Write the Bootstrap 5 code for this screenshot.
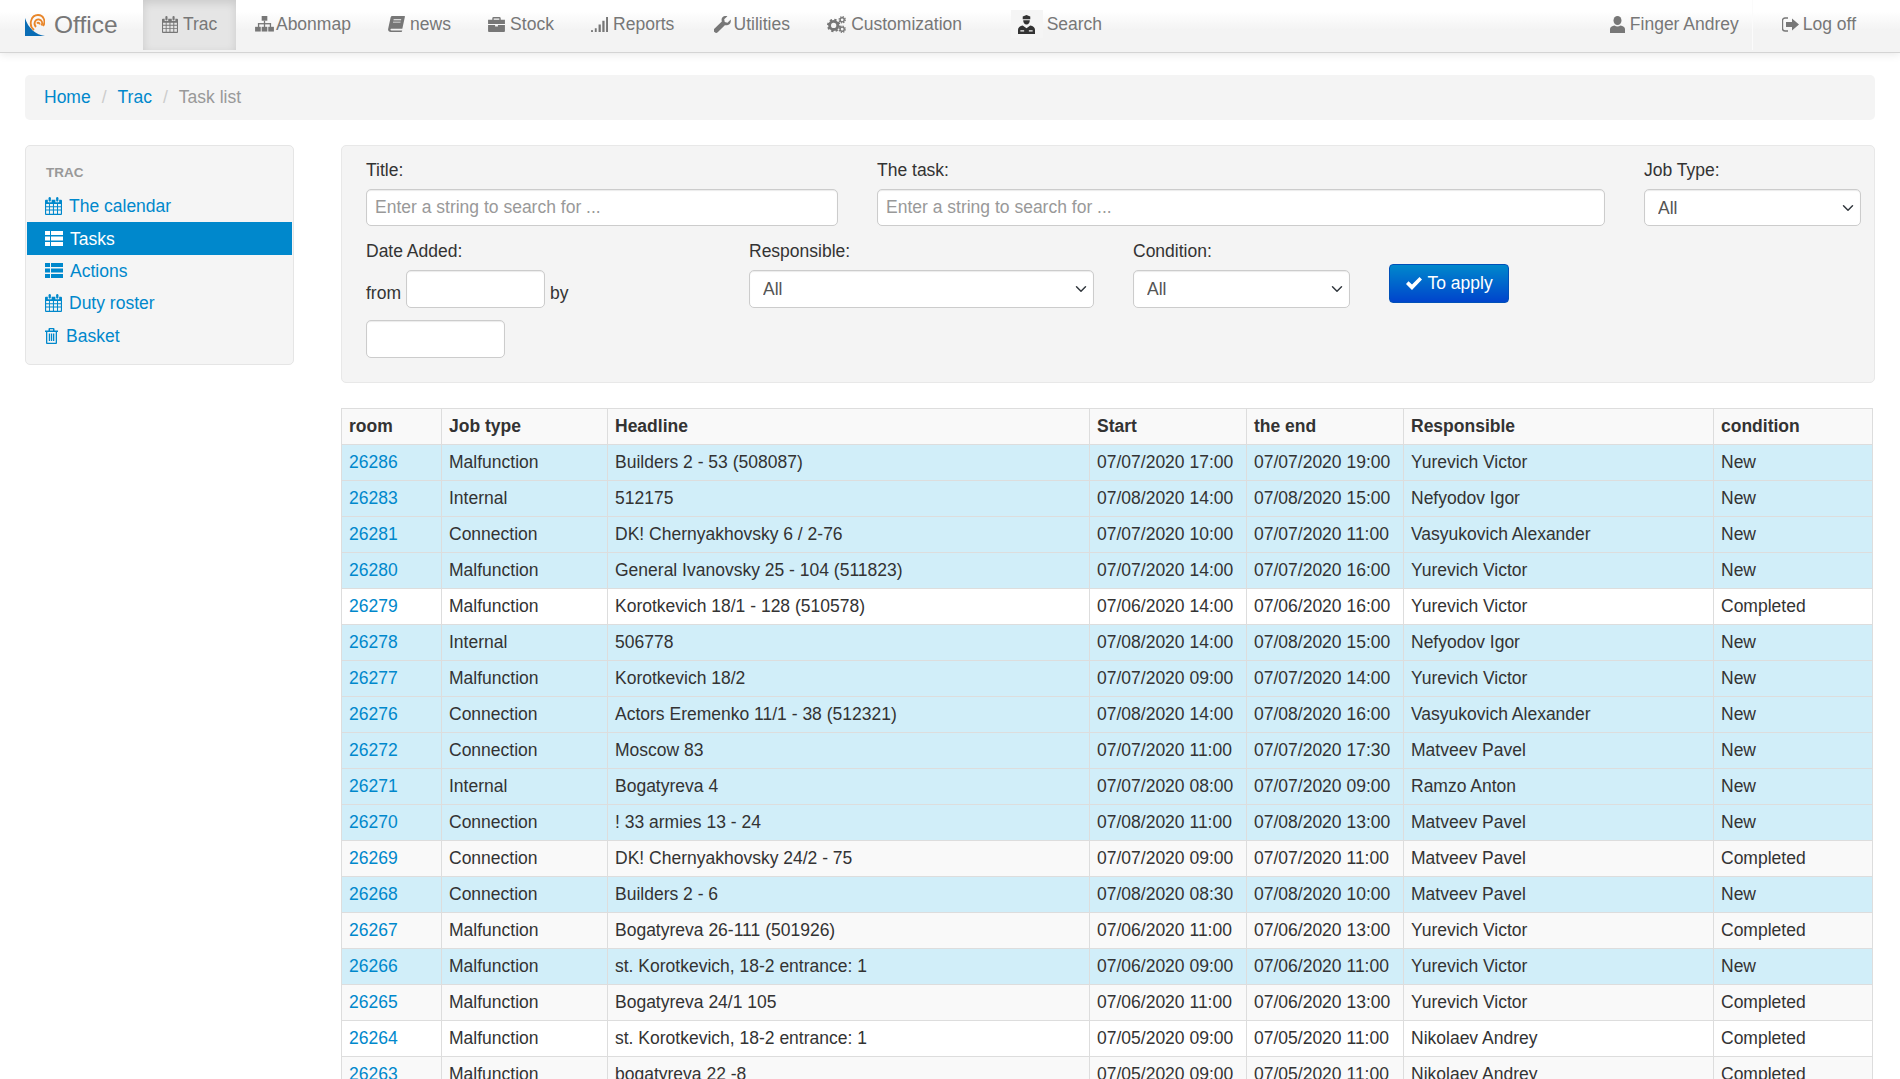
<!DOCTYPE html>
<html lang="en">
<head>
  <meta charset="UTF-8">
  <title>Task list</title>
  <meta name="viewport" content="width=device-width, initial-scale=1">
  <link href="https://cdn.jsdelivr.net/npm/bootstrap@5.3.0/dist/css/bootstrap.min.css" rel="stylesheet">
  <style>
    html, body { height: 100vh; overflow: hidden; }
    body {
      font-family: "Liberation Sans", Arial, sans-serif;
      font-size: 17.5px;
      line-height: 24px;
      color: #333;
      background: #fff;
    }
    a { color: #0088cc; text-decoration: none; }
    .ico { display: inline-block; fill: currentColor; flex: none; }

    /* Top bar */
    .top-bar {
      height: 53px;
      padding: 0 !important;
      background: linear-gradient(#fff 22%, #f3f3f3 58%);
      border-bottom: 1px solid #d4d4d4;
      box-shadow: 0 1px 9px rgba(0, 0, 0, .1);
      flex-wrap: nowrap;
    }
    .top-brand { display: flex; align-items: center; gap: 9px; margin: 0 25px; width: 93px; font-size: 24.5px; color: #777; height: 52px; padding-bottom: 2px; }
    .top-link {
      display: flex;
      align-items: center;
      gap: 5px;
      height: 50px;
      margin-bottom: 2px;
      padding: 0 18.6px 2px;
      color: #777;
      white-space: nowrap;
    }
    .top-link.tight { gap: 2px; }
    .top-link.tool { gap: 3px; padding-left: 20.6px; }
    .top-link.current { padding: 0 19px 2px; background: #e5e5e5; box-shadow: inset 0 3px 8px rgba(0, 0, 0, .12); }
    .top-link.police { margin-left: 12px; padding-left: 27px; gap: 11px; }
    .top-link .badge-box { background: #f5f5f5; display: flex; width: 32px; height: 28px; margin-left: -9px; margin-right: -7px; align-items: center; justify-content: center; color: #333; }
    .top-right { margin-left: auto; display: flex; }
    .top-right .top-link { padding: 0 13px 2px 0; }
    .top-right .logoff { gap: 4px; border-left: 1px solid #fbfbfb; padding: 0 44px 2px 29px; }

    /* Breadcrumb */
    .trail {
      margin: 22px 25px 25px;
      height: 45px;
      padding: 0 19px 2px;
      align-items: center;
      background: #f4f4f4;
      border-radius: 5px;
      --bs-breadcrumb-margin-bottom: 0;
      --bs-breadcrumb-item-padding-x: 11px;
      --bs-breadcrumb-divider-color: #ccc;
      --bs-breadcrumb-item-active-color: #999;
    }

    /* Page columns */
    .page-body { padding: 0 25px; gap: 47px; }
    .side-box {
      width: 269px;
      height: 220px;
      flex: none;
      padding: 15px 1px 0;
      background: #f5f5f5;
      border: 1px solid #e5e5e5;
      border-radius: 5px;
    }
    .side-head { padding-left: 19px; margin-bottom: 5px; font-size: 13.5px; font-weight: bold; color: #999; }
    .side-link { display: flex; align-items: center; gap: 7px; height: 32.4px; padding-left: 18px; color: #0088cc; }
    .side-link.bin-link { gap: 8px; }
    .side-link.current { background: #0088cc; color: #fff; }
    .main-col { flex: 1; min-width: 0; }

    /* Filter */
    .filter-box {
      height: 238px;
      padding: 12px 13px 0 24px;
      background: #f4f4f4;
      border: 1px solid #e8e8e8;
      border-radius: 5px;
      margin-bottom: 25px;
    }
    .filter-line { display: flex; gap: 39px; }
    .filter-line + .filter-line { margin-top: 13px; }
    .f-title { width: 472px; }
    .f-task { width: 728px; }
    .f-type, .f-state { width: 217px; }
    .f-date { width: 344px; }
    .f-resp { width: 345px; }
    .filter-box label { display: block; margin-bottom: 7px; }
    .filter-box .form-control, .filter-box .form-select {
      height: 37px;
      font-size: 17.5px;
      line-height: 24px;
      padding: 5px 8px;
      color: #555;
      border: 1px solid #ccc;
      border-radius: 5px;
      box-shadow: inset 0 1px 1px rgba(0, 0, 0, .08);
    }
    .filter-box .form-select { padding-left: 13px; background-position: right 5px center; background-size: 14px 12px; }
    .filter-box .form-control::placeholder { color: #999; }
    .second-line .form-control, .second-line .form-select { height: 38px; }
    .date-wrap { display: flex; flex-wrap: wrap; align-items: center; column-gap: 5px; row-gap: 12px; }
    .date-wrap span { margin-top: 8px; }
    .date-input { width: 139px !important; }
    .apply-btn {
      display: flex;
      align-items: center;
      gap: 6px;
      height: 39px;
      margin-top: 25px;
      padding: 0 15.5px;
      font-size: 17.5px;
      color: #fff;
      background: linear-gradient(#0088cc, #0044cc);
      border: 1px solid #0050b8;
      border-radius: 4px;
    }
    .apply-btn:hover { color: #fff; }

    /* Task table */
    .task-table {
      table-layout: fixed;
      width: 1532px;
      margin: 0;
      --bs-table-border-color: #ddd;
      --bs-table-bg: #fff;
      --bs-table-color: #333;
    }
    .task-table th, .task-table td { padding: 5px 7px; line-height: 25px; white-space: nowrap; border-color: #ddd; }
    .task-table thead th { --bs-table-bg: #f9f9f9; height: 36px; font-weight: bold; }
    .task-table tr.is-done { --bs-table-bg: #f9f9f9; }
    .task-table tr.is-plain { --bs-table-bg: #fff; }
    .task-table tr.is-new { --bs-table-bg: #d1eef9; }
    .task-table th:nth-child(1) { width: 100px; }
    .task-table th:nth-child(2) { width: 166px; }
    .task-table th:nth-child(3) { width: 482px; }
    .task-table th:nth-child(4), .task-table th:nth-child(5) { width: 157px; }
    .task-table th:nth-child(6) { width: 310px; }
  </style>
</head>
<body>

  <!-- Glyphs used by the bar, side menu and button -->
  <svg width="0" height="0" class="position-absolute">
    <symbol id="i-cal" viewBox="0 0 18 19">
      <path fill-rule="evenodd" d="M1 3h2v2.5h4V3h4v2.5h4V3h2a1 1 0 0 1 1 1v14a1 1 0 0 1-1 1H1a1 1 0 0 1-1-1V4a1 1 0 0 1 1-1zM1.200 7.500v2.300h3v-2.300zM5.200 7.500v2.300h3.200v-2.300zM9.500 7.500v2.300h3.200v-2.300zM13.800 7.500v2.300h3v-2.300zM1.200 10.800v2.500h3v-2.500zM5.200 10.800v2.500h3.200v-2.500zM9.500 10.800v2.500h3.200v-2.500zM13.800 10.800v2.500h3v-2.500zM1.200 14.300v3.300h3v-3.300zM5.200 14.300v3.300h3.200v-3.300zM9.500 14.300v3.300h3.200v-3.300zM13.800 14.300v3.300h3v-3.300z"/>
      <rect x="3.800" y="0" width="2.400" height="5" rx="1.200"/><rect x="11.800" y="0" width="2.400" height="5" rx="1.200"/>
    </symbol>
    <symbol id="i-map" viewBox="0 0 20 17">
      <rect x="7" y="0" width="6" height="5"/><rect x="9.300" y="5" width="1.400" height="7"/><rect x="3" y="7.500" width="14" height="1.400"/><rect x="3" y="8" width="1.400" height="4"/><rect x="15.600" y="8" width="1.400" height="4"/>
      <rect x="0" y="11.500" width="6" height="5"/><rect x="7" y="11.500" width="6" height="5"/><rect x="14" y="11.500" width="6" height="5"/>
    </symbol>
    <symbol id="i-book" viewBox="0 0 18 17">
      <path d="M4.500 0H17.500a.5.500 0 0 1 .5.600L15.200 13.500H3.800c-1 0-1.300.700-1.200 1.200.1.400.5.700 1 .7h11.500l-.3 1.100a.7.700 0 0 1-.7.500H3c-2 0-3.200-1.300-2.900-3.100L2.800 1.400A1.800 1.800 0 0 1 4.500 0zM6 3.500l-.2 1h8l.2-1zM5.400 6l-.2 1h8l.2-1z" fill-rule="evenodd"/>
    </symbol>
    <symbol id="i-case" viewBox="0 0 18 16">
      <path fill-rule="evenodd" d="M6 0h6a1.500 1.500 0 0 1 1.500 1.500V3H18v4.500H0V3h4.500V1.500A1.500 1.500 0 0 1 6 0zm0 1.500V3h6V1.500zM0 8.500h7.500V10h3V8.500H18V15a1 1 0 0 1-1 1H1a1 1 0 0 1-1-1z"/>
    </symbol>
    <symbol id="i-bars" viewBox="0 0 18 16">
      <rect x="0" y="14" width="2" height="2"/><rect x="4" y="12" width="2" height="4"/><rect x="8" y="8" width="2.400" height="8"/><rect x="12" y="4" width="2.400" height="12"/><rect x="16" y="0" width="2.400" height="16"/>
    </symbol>
    <symbol id="i-wrench" viewBox="0 0 18 18">
      <path d="M17.700 3.700c.6 2.600-.6 5-3 5.900-1.100.4-2.200.4-3.200.1L4.200 17a2.900 2.900 0 0 1-4.100-.2A2.900 2.900 0 0 1 .9 13l7.400-7.300c-.4-1-.4-2.200 0-3.200C9.200.3 11.600-.6 14.200.300L10.800 3.500l.6 2.900 2.900.7z"/>
    </symbol>
    <symbol id="i-cogs" viewBox="0 0 20 18">
      <circle cx="7" cy="10" r="4.300" fill="none" stroke="currentColor" stroke-width="3"/>
      <circle cx="7" cy="10" r="6" fill="none" stroke="currentColor" stroke-width="2.200" stroke-dasharray="2.400 2.300"/>
      <circle cx="16" cy="4" r="2.200" fill="none" stroke="currentColor" stroke-width="1.500"/>
      <circle cx="16" cy="4" r="3.300" fill="none" stroke="currentColor" stroke-width="1.300" stroke-dasharray="1.400 1.200"/>
      <circle cx="16" cy="14" r="2.200" fill="none" stroke="currentColor" stroke-width="1.500"/>
      <circle cx="16" cy="14" r="3.300" fill="none" stroke="currentColor" stroke-width="1.300" stroke-dasharray="1.400 1.200"/>
    </symbol>
    <symbol id="i-police" viewBox="0 0 18 20">
      <path d="M5 1.500 9 0l4 1.500V4.500H5z"/><path d="M5.500 5.500h7c0 2.800-1.300 4.500-3.500 4.500S5.500 8.300 5.500 5.500z"/>
      <path fill-rule="evenodd" d="M5 11l4 3 4-3c3 .7 5 2 5 4.500V20H0v-4.500C0 13 2 11.700 5 11zM2.500 16v1.500h4V16zM11.500 16v1.500h4V16z"/>
    </symbol>
    <symbol id="i-user" viewBox="0 0 15 17">
      <ellipse cx="7.500" cy="4.500" rx="4" ry="4.500"/><path d="M0 17v-4c0-2 2-3 4.500-3.500 1.800 1.200 4.200 1.200 6 0C13 10 15 11 15 13v4z"/>
    </symbol>
    <symbol id="i-exit" viewBox="0 0 17 15">
      <path d="M6 1H3a2.500 2.500 0 0 0-2.500 2.500v8A2.500 2.500 0 0 0 3 14h3" fill="none" stroke="currentColor" stroke-width="1.400"/>
      <path d="M4 5h6V1.500l7 6-7 6V10H4z"/>
    </symbol>
    <symbol id="i-list" viewBox="0 0 18 15">
      <rect x="0" y="0" width="5" height="4"/><rect x="6" y="0" width="12" height="4"/><rect x="0" y="5.500" width="5" height="4"/><rect x="6" y="5.500" width="12" height="4"/><rect x="0" y="11" width="5" height="4"/><rect x="6" y="11" width="12" height="4"/>
    </symbol>
    <symbol id="i-bin" viewBox="0 0 13 16">
      <path fill-rule="evenodd" d="M4.500 0h4A1 1 0 0 1 9.500 1V2.500H13V4h-1v11a1 1 0 0 1-1 1H2a1 1 0 0 1-1-1V4H0V2.500h3.500V1a1 1 0 0 1 1-1zM5 1.200V2.500h3V1.200zM2.300 4v10.800h8.400V4zM3.800 5.500h1.300V13H3.800zM5.900 5.500h1.300V13H5.900zM8 5.500h1.300V13H8z"/>
    </symbol>
    <symbol id="i-check" viewBox="0 0 16 13">
      <path d="M0 7l2.500-2.700L6 7.500 13.500 0 16 2.500 6 13z"/>
    </symbol>
  </svg>

  <!-- Top bar -->
  <nav class="navbar top-bar">
    <a class="top-brand" href="#">
      <svg class="ico" width="20" height="22" viewBox="0 0 20 22">
        <path d="M0 4v18h20C11 21 3 14 0 4z" fill="#0a6db5"/>
        <g fill="none" stroke="#e8862a" stroke-width="1.800">
          <path d="M9 16C3 11 6 1 13 1c6 0 8 7 5 11"/><path d="M11 13c-3-3-1-8 3-7.500 3 .4 4 3.500 2.500 6"/><path d="M12 9.500c1-1.500 3-.5 2.500 1"/>
        </g>
      </svg>
      Office
    </a>
    <a class="top-link current" href="#"><svg class="ico" width="16" height="17"><use href="#i-cal"/></svg>Trac</a>
    <a class="top-link tight" href="#"><svg class="ico" width="19" height="16"><use href="#i-map"/></svg>Abonmap</a>
    <a class="top-link" href="#"><svg class="ico" width="17" height="16"><use href="#i-book"/></svg>news</a>
    <a class="top-link" href="#"><svg class="ico" width="17" height="15"><use href="#i-case"/></svg>Stock</a>
    <a class="top-link" href="#"><svg class="ico" width="17" height="15"><use href="#i-bars"/></svg>Reports</a>
    <a class="top-link tool" href="#"><svg class="ico" width="17" height="17"><use href="#i-wrench"/></svg>Utilities</a>
    <a class="top-link" href="#"><svg class="ico" width="19" height="17"><use href="#i-cogs"/></svg>Customization</a>
    <a class="top-link police" href="#"><span class="badge-box"><svg class="ico" width="17" height="19"><use href="#i-police"/></svg></span>Search</a>
    <div class="top-right">
      <a class="top-link" href="#"><svg class="ico" width="15" height="17"><use href="#i-user"/></svg>Finger Andrey</a>
      <a class="top-link logoff" href="#"><svg class="ico" width="17" height="15"><use href="#i-exit"/></svg>Log off</a>
    </div>
  </nav>

  <!-- Breadcrumb -->
  <ol class="breadcrumb trail">
    <li class="breadcrumb-item"><a href="#">Home</a></li>
    <li class="breadcrumb-item"><a href="#">Trac</a></li>
    <li class="breadcrumb-item active">Task list</li>
  </ol>

  <div class="d-flex align-items-start page-body">

    <!-- Side menu -->
    <div class="side-box">
      <div class="side-head">TRAC</div>
      <a class="side-link" href="#"><svg class="ico" width="17" height="18"><use href="#i-cal"/></svg>The calendar</a>
      <a class="side-link current" href="#"><svg class="ico" width="18" height="15"><use href="#i-list"/></svg>Tasks</a>
      <a class="side-link" href="#"><svg class="ico" width="18" height="15"><use href="#i-list"/></svg>Actions</a>
      <a class="side-link" href="#"><svg class="ico" width="17" height="18"><use href="#i-cal"/></svg>Duty roster</a>
      <a class="side-link bin-link" href="#"><svg class="ico" width="13" height="16"><use href="#i-bin"/></svg>Basket</a>
    </div>

    <div class="main-col">

      <!-- Filter -->
      <form class="filter-box">
        <div class="filter-line">
          <div class="f-title">
            <label>Title:</label>
            <input type="text" class="form-control" placeholder="Enter a string to search for ...">
          </div>
          <div class="f-task">
            <label>The task:</label>
            <input type="text" class="form-control" placeholder="Enter a string to search for ...">
          </div>
          <div class="f-type">
            <label>Job Type:</label>
            <select class="form-select"><option>All</option></select>
          </div>
        </div>
        <div class="filter-line second-line">
          <div class="f-date">
            <label>Date Added:</label>
            <div class="date-wrap">
              <span>from</span>
              <input type="text" class="form-control date-input">
              <span>by</span>
              <input type="text" class="form-control date-input">
            </div>
          </div>
          <div class="f-resp">
            <label>Responsible:</label>
            <select class="form-select"><option>All</option></select>
          </div>
          <div class="f-state">
            <label>Condition:</label>
            <select class="form-select"><option>All</option></select>
          </div>
          <div>
            <button type="button" class="btn apply-btn"><svg class="ico" width="16" height="13"><use href="#i-check"/></svg>To apply</button>
          </div>
        </div>
      </form>

      <!-- Tasks -->
      <table class="table table-bordered task-table">
        <thead>
          <tr><th>room</th><th>Job type</th><th>Headline</th><th>Start</th><th>the end</th><th>Responsible</th><th>condition</th></tr>
        </thead>
        <tbody>
          <tr class="is-new"><td><a href="#">26286</a></td><td>Malfunction</td><td>Builders 2 - 53 (508087)</td><td>07/07/2020 17:00</td><td>07/07/2020 19:00</td><td>Yurevich Victor</td><td>New</td></tr>
          <tr class="is-new"><td><a href="#">26283</a></td><td>Internal</td><td>512175</td><td>07/08/2020 14:00</td><td>07/08/2020 15:00</td><td>Nefyodov Igor</td><td>New</td></tr>
          <tr class="is-new"><td><a href="#">26281</a></td><td>Connection</td><td>DK! Chernyakhovsky 6 / 2-76</td><td>07/07/2020 10:00</td><td>07/07/2020 11:00</td><td>Vasyukovich Alexander</td><td>New</td></tr>
          <tr class="is-new"><td><a href="#">26280</a></td><td>Malfunction</td><td>General Ivanovsky 25 - 104 (511823)</td><td>07/07/2020 14:00</td><td>07/07/2020 16:00</td><td>Yurevich Victor</td><td>New</td></tr>
          <tr class="is-plain"><td><a href="#">26279</a></td><td>Malfunction</td><td>Korotkevich 18/1 - 128 (510578)</td><td>07/06/2020 14:00</td><td>07/06/2020 16:00</td><td>Yurevich Victor</td><td>Completed</td></tr>
          <tr class="is-new"><td><a href="#">26278</a></td><td>Internal</td><td>506778</td><td>07/08/2020 14:00</td><td>07/08/2020 15:00</td><td>Nefyodov Igor</td><td>New</td></tr>
          <tr class="is-new"><td><a href="#">26277</a></td><td>Malfunction</td><td>Korotkevich 18/2</td><td>07/07/2020 09:00</td><td>07/07/2020 14:00</td><td>Yurevich Victor</td><td>New</td></tr>
          <tr class="is-new"><td><a href="#">26276</a></td><td>Connection</td><td>Actors Eremenko 11/1 - 38 (512321)</td><td>07/08/2020 14:00</td><td>07/08/2020 16:00</td><td>Vasyukovich Alexander</td><td>New</td></tr>
          <tr class="is-new"><td><a href="#">26272</a></td><td>Connection</td><td>Moscow 83</td><td>07/07/2020 11:00</td><td>07/07/2020 17:30</td><td>Matveev Pavel</td><td>New</td></tr>
          <tr class="is-new"><td><a href="#">26271</a></td><td>Internal</td><td>Bogatyreva 4</td><td>07/07/2020 08:00</td><td>07/07/2020 09:00</td><td>Ramzo Anton</td><td>New</td></tr>
          <tr class="is-new"><td><a href="#">26270</a></td><td>Connection</td><td>! 33 armies 13 - 24</td><td>07/08/2020 11:00</td><td>07/08/2020 13:00</td><td>Matveev Pavel</td><td>New</td></tr>
          <tr class="is-done"><td><a href="#">26269</a></td><td>Connection</td><td>DK! Chernyakhovsky 24/2 - 75</td><td>07/07/2020 09:00</td><td>07/07/2020 11:00</td><td>Matveev Pavel</td><td>Completed</td></tr>
          <tr class="is-new"><td><a href="#">26268</a></td><td>Connection</td><td>Builders 2 - 6</td><td>07/08/2020 08:30</td><td>07/08/2020 10:00</td><td>Matveev Pavel</td><td>New</td></tr>
          <tr class="is-done"><td><a href="#">26267</a></td><td>Malfunction</td><td>Bogatyreva 26-111 (501926)</td><td>07/06/2020 11:00</td><td>07/06/2020 13:00</td><td>Yurevich Victor</td><td>Completed</td></tr>
          <tr class="is-new"><td><a href="#">26266</a></td><td>Malfunction</td><td>st. Korotkevich, 18-2 entrance: 1</td><td>07/06/2020 09:00</td><td>07/06/2020 11:00</td><td>Yurevich Victor</td><td>New</td></tr>
          <tr class="is-done"><td><a href="#">26265</a></td><td>Malfunction</td><td>Bogatyreva 24/1 105</td><td>07/06/2020 11:00</td><td>07/06/2020 13:00</td><td>Yurevich Victor</td><td>Completed</td></tr>
          <tr class="is-plain"><td><a href="#">26264</a></td><td>Malfunction</td><td>st. Korotkevich, 18-2 entrance: 1</td><td>07/05/2020 09:00</td><td>07/05/2020 11:00</td><td>Nikolaev Andrey</td><td>Completed</td></tr>
          <tr class="is-done"><td><a href="#">26263</a></td><td>Malfunction</td><td>bogatyreva 22 -8</td><td>07/05/2020 09:00</td><td>07/05/2020 11:00</td><td>Nikolaev Andrey</td><td>Completed</td></tr>
        </tbody>
      </table>

    </div>
  </div>

</body>
</html>
